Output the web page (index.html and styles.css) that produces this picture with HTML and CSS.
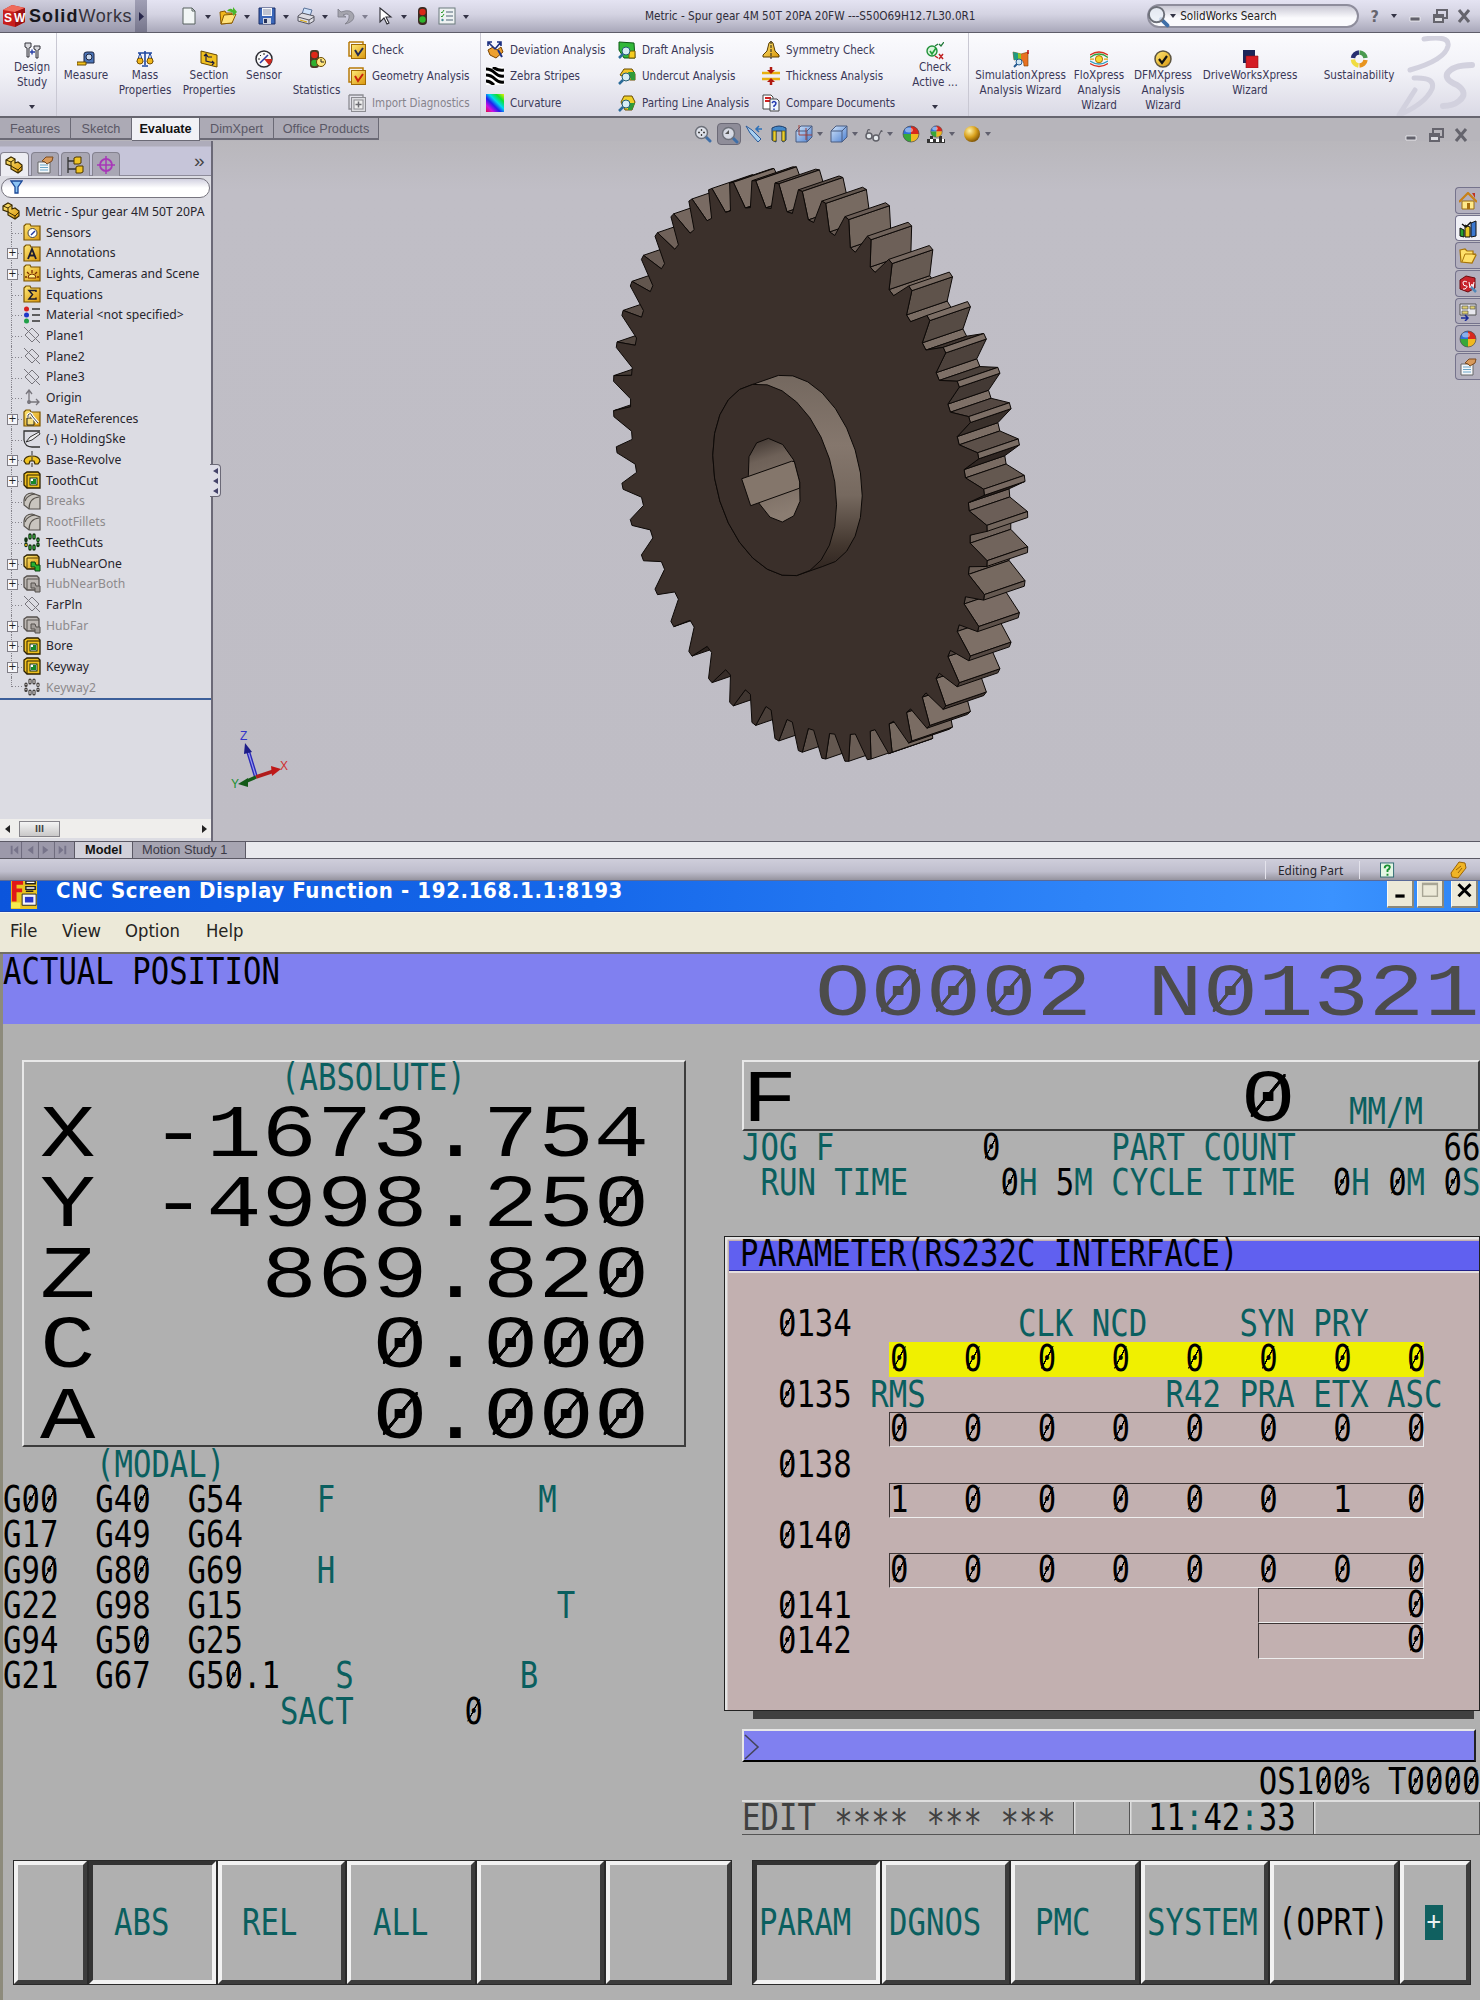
FILE: index.html
```html
<!DOCTYPE html>
<html lang="en">
<head>
<meta charset="utf-8">
<title>SolidWorks and CNC Screen Display</title>
<link rel="stylesheet" href="styles.css">
</head>
<body>
<svg class="defs" width="0" height="0">
<defs>
<linearGradient id="gold" x1="0" y1="0" x2="1" y2="1"><stop offset="0" stop-color="#ffe978"/><stop offset="1" stop-color="#d9960c"/></linearGradient>
<radialGradient id="goldball" cx=".35" cy=".3" r=".8"><stop offset="0" stop-color="#fff2a8"/><stop offset=".5" stop-color="#d9a11c"/><stop offset="1" stop-color="#6b4300"/></radialGradient>
<linearGradient id="rainbow" x1="0" y1="1" x2="1" y2="0"><stop offset="0" stop-color="#e01040"/><stop offset=".2" stop-color="#d010e0"/><stop offset=".4" stop-color="#2020f0"/><stop offset=".58" stop-color="#00d8f0"/><stop offset=".78" stop-color="#10e030"/><stop offset="1" stop-color="#f0f000"/></linearGradient>
<linearGradient id="blueface" x1="0" y1="0" x2="1" y2="1"><stop offset="0" stop-color="#d4e6fa"/><stop offset="1" stop-color="#4a7ed0"/></linearGradient>
<linearGradient id="hubside" x1="0" y1="0" x2="0" y2="1"><stop offset="0" stop-color="#74685f"/><stop offset=".35" stop-color="#85776d"/><stop offset=".6" stop-color="#76695f"/><stop offset=".85" stop-color="#43372f"/><stop offset="1" stop-color="#2b211d"/></linearGradient>
<linearGradient id="borewall" x1="0" y1="0" x2=".2" y2="1"><stop offset="0" stop-color="#3c322d"/><stop offset=".3" stop-color="#6e6158"/><stop offset="1" stop-color="#8b7d72"/></linearGradient>
<symbol id="caret" viewBox="0 0 6 4"><path d="M0 0h6L3 4z" fill="#333345"/></symbol>
<symbol id="part" viewBox="0 0 18 18"><path d="M1 4l5-3 4 2v4l3-1 4 3v5l-4 3-7-4v-3L1 8z" fill="url(#gold)" stroke="#3a2a00" stroke-width="1.2"/><path d="M1 4l5 2 4-3M6 6v4l7 4 4-4M13 14v3" fill="none" stroke="#3a2a00"/></symbol>
<symbol id="folder" viewBox="0 0 18 18"><path d="M1 3l2-2h4l1 2h9v14H1z" fill="url(#gold)" stroke="#7a5400" stroke-width="1.2"/></symbol>
<symbol id="plane" viewBox="0 0 18 18"><path d="M9 2l7 7-7 7-7-7zM1 1l16 16" fill="none" stroke="#77757c"/></symbol>
<symbol id="cut" viewBox="0 0 18 18"><path d="M1 3l3-2h11l2 2v14H4l-3-3z" fill="#f0c020" stroke="#2c2000" stroke-width="1.3"/><path d="M4 17V4h13" fill="none" stroke="#2c2000"/><rect x="7" y="7" width="7" height="7" fill="#fff" stroke="#103010"/><path d="M8 13v-3h2V8h3v5z" fill="#18882a"/></symbol>
<symbol id="boss" viewBox="0 0 18 18"><path d="M1 3l3-2h10l2 2v12H4l-3-3z" fill="url(#gold)" stroke="#2c2000" stroke-width="1.3"/><path d="M4 15V4h12" fill="none" stroke="#5a4000"/><path d="M8 8h4l1 3h4v6h-5v-4H8z" fill="#28b030" stroke="#0a4010"/></symbol>
<symbol id="bossoff" viewBox="0 0 18 18"><path d="M1 3l3-2h10l2 2v12H4l-3-3z" fill="#bdb8b4" stroke="#55504d" stroke-width="1.3"/><path d="M4 15V4h12" fill="none" stroke="#55504d"/><path d="M8 8h4l1 3h4v6h-5v-4H8z" fill="#a19c98" stroke="#55504d"/></symbol>
<symbol id="fillet" viewBox="0 0 18 18"><path d="M1 8Q2 1 9 1l8 3v13H6l-5-4z" fill="#c9c5bf" stroke="#55514c" stroke-width="1.2"/><path d="M6 17Q6 6 16 5M2 9Q4 3 12 2" fill="none" stroke="#55514c" stroke-width="1.2"/></symbol>
<symbol id="pattern" viewBox="0 0 18 18"><path d="M7 2v3M11 2v3M7 13v3M11 13v3M3 6v1.500M3 11v1.500M15 6v1.500M15 11v1.500" fill="none" stroke="#123312" stroke-width="3.400" stroke-linecap="round"/><path d="M7 2v3M11 2v3M7 13v3M11 13v3M15 6v2M15 11v1" stroke="#35b53a" stroke-width="1.300"/><path d="M3 11v2" stroke="#e8b010" stroke-width="1.600"/></symbol>
<symbol id="patternoff" viewBox="0 0 18 18"><path d="M7 2v3M11 2v3M7 13v3M11 13v3M3 6v1.500M3 11v1.500M15 6v1.500M15 11v1.500" fill="none" stroke="#45413f" stroke-width="3.200" stroke-linecap="round"/><path d="M7 2v3M11 2v3M7 13v3M11 13v3M15 6v2M15 11v1M3 6v1M3 11v1" stroke="#c9c4c0" stroke-width="1.300"/></symbol>
<symbol id="ball" viewBox="0 0 18 18"><path d="M9 9V1a8 8 0 0 0-8 8z" fill="#2f70d8"/><path d="M9 9h8a8 8 0 0 0-8-8z" fill="#d8281c"/><path d="M9 9H1a8 8 0 0 0 8 8z" fill="#38a838"/><path d="M9 9v8a8 8 0 0 0 8-8z" fill="#f0b820"/><circle cx="9" cy="9" r="8" fill="none" stroke="#4a4a50" stroke-width=".7"/><ellipse cx="7" cy="5" rx="4" ry="2.5" fill="#fff" opacity=".45"/></symbol>
<symbol id="lens" viewBox="0 0 18 18"><path d="M11 11l5 5" stroke="#3f6fa8" stroke-width="3" stroke-linecap="round"/><circle cx="7.5" cy="7.5" r="6" fill="#e8eef6" fill-opacity=".8" stroke="#6d7079" stroke-width="1.5"/></symbol>
<symbol id="wmin" viewBox="0 0 18 18"><path d="M4 10h10v4H4z" fill="#62616b" stroke="#f2f2f6" stroke-width=".8"/></symbol>
<symbol id="wres" viewBox="0 0 18 18"><path d="M6 7V3h10v8h-4" fill="none" stroke="#65646d" stroke-width="2"/><path d="M3 8h9v7H3z" fill="#dddde2" stroke="#65646d" stroke-width="2"/><path d="M3 10h9" stroke="#65646d" stroke-width="2"/></symbol>
<symbol id="wclose" viewBox="0 0 18 18"><path d="M4 3l10 12M14 3L4 15" stroke="#65646d" stroke-width="3"/></symbol>
<symbol id="cube" viewBox="0 0 18 18"><path d="M1 6l5-5h11v11l-5 5H1z" fill="url(#blueface)" stroke="#4b5c80"/><path d="M1 6h11v11M12 6l5-5" fill="none" stroke="#4b5c80"/></symbol>
<symbol id="checkbox" viewBox="0 0 18 18"><path d="M1 1h14v3M1 1v14h3" fill="none" stroke="#b87b08" stroke-width="1.5"/><rect x="3.5" y="3.5" width="14" height="14" fill="url(#gold)" stroke="#a06a05"/></symbol>
<symbol id="hand" viewBox="0 0 18 18"><path d="M2 6h12v11H2z" fill="#f4f7fa" stroke="#666"/><path d="M4 9h8M4 11.5h8M4 14h8" stroke="#6aa5c8" stroke-width="1.2"/><path d="M6 5l4-4h7l-1 4-5 3-2-2z" fill="#d89a5c" stroke="#7a4a20"/></symbol>
</defs>
</svg>

<section class="sw">
  <header class="titlebar">
    <div class="brand">
      <svg class="cubelogo" viewBox="0 0 24 24"><path d="M1 6l9-5 13 3v14l-10 5-12-3z" fill="#c81e1c"/><path d="M1 6l9-5 13 3-10 4z" fill="#ef6b5c"/><path d="M13 8l10-4v14l-10 5z" fill="#9d1012"/><text x="2" y="18" class="logotext">S</text><text x="12" y="18" class="logotext">W</text></svg>
      <span class="brandname"><b>Solid</b>Works</span>
    </div>
    <div class="brandarrow"><svg width="5" height="9" viewBox="0 0 5 9"><path d="M0 0l5 4.5L0 9z" fill="#26254a"/></svg></div>
    <div class="quick">
      <svg class="ic" viewBox="0 0 18 18"><path d="M3 1h9l3 3v13H3z" fill="#f2f6f6" stroke="#56605f"/><path d="M12 1v3h3" fill="none" stroke="#56605f"/></svg><svg class="car"><use href="#caret"/></svg>
      <svg class="ic" viewBox="0 0 18 18"><path d="M1 5l5-1 1 2h6v10l-11 1z" fill="#f2b81c" stroke="#8a5a00"/><path d="M2 17l3-9 12-1-4 9z" fill="#ffe27a" stroke="#8a5a00"/><path d="M8 4q3-4 6-1V0l4 5-4 4V6q-3-2-6-2z" fill="#49b82c"/></svg><svg class="car"><use href="#caret"/></svg>
      <svg class="ic" viewBox="0 0 18 18"><path d="M1 1h16v16H1z" fill="#3a66b8" stroke="#1c2f66"/><path d="M4 1h10v8H4z" fill="#f4f6fa"/><path d="M5 3h8M5 5h8M5 7h8" stroke="#8a92a8"/><path d="M5 11h8v6H5z" fill="#cfd4df"/><path d="M6 12h3v4H6z" fill="#26325a"/></svg><svg class="car"><use href="#caret"/></svg>
      <svg class="ic" viewBox="0 0 18 18"><path d="M5 7l2-6 8 2-2 6z" fill="#cfe2fa" stroke="#5a7299"/><path d="M1 9l4-3 12 3v5l-5 3-11-3z" fill="#dcdce2" stroke="#55555f"/><path d="M1 10l11 3 5-3M12 13v4" fill="none" stroke="#55555f"/><path d="M3 13l7 2" stroke="#d9a810"/></svg><svg class="car"><use href="#caret"/></svg>
      <svg class="ic" viewBox="0 0 18 18"><path d="M1 2v8h8L6 8q7-3 6 3 0 3-4 6 9-2 9-8Q15 1 4 5z" fill="#a5a5ae" stroke="#7c7c88" stroke-width=".8"/></svg><svg class="car dim"><use href="#caret"/></svg>
      <svg class="ic" viewBox="0 0 18 18"><path d="M4 1v14l4-4 3 6 2-1-3-6h5z" fill="#fff" stroke="#2c2c33" stroke-width="1.1"/></svg><svg class="car"><use href="#caret"/></svg>
      <svg class="ic light" viewBox="0 0 18 18"><rect x="5" y="0" width="9" height="18" rx="4" fill="#3b2b22"/><circle cx="9.500" cy="5" r="3.200" fill="#d82818"/><circle cx="9.500" cy="12.500" r="3.200" fill="#2fb52c"/></svg>
      <svg class="ic list" viewBox="0 0 18 18"><rect x="1" y="1" width="16" height="16" fill="#eef2f2" stroke="#6b7b7d"/><path d="M3 5l1 1 2-3M3 9l1 1 2-3" fill="none" stroke="#2a9a2a"/><circle cx="4.500" cy="13" r="1.200" fill="#4a8a92"/><path d="M8 5h7M8 9h7M8 13h7" stroke="#8494a0" stroke-width="1.500"/></svg><svg class="car"><use href="#caret"/></svg>
    </div>
    <div class="doctitle">Metric - Spur gear 4M 50T 20PA 20FW ---S50O69H12.7L30.0R1</div>
    <div class="search"><svg class="bigic"><use href="#lens"/></svg><svg class="car"><use href="#caret"/></svg><span>SolidWorks Search</span></div>
    <div class="winctl"><b>?</b><svg class="car"><use href="#caret"/></svg><svg class="wi"><use href="#wmin"/></svg><svg class="wi"><use href="#wres"/></svg><svg class="wi"><use href="#wclose"/></svg></div>
  </header>

  <nav class="ribbon">
    <div class="cmd high w-design"><svg class="ic" viewBox="0 0 18 18"><path d="M2 1h6v4L6 6v9H4V6L2 5zM11 4h6v3l-2 1v8h-2V8l-2-1z" fill="#d9d9de" stroke="#33333a"/><path d="M7 10h5M9 7.500v5" stroke="#2840a8" stroke-width="1.400"/></svg><span>Design<br>Study</span><svg class="car"><use href="#caret"/></svg></div>
    <div class="cmd w-measure sepl"><svg class="ic" viewBox="0 0 18 18"><path d="M7 4q0-2 3-2h5q2 0 2 2v9H7z" fill="#4a74b8" stroke="#1c2440"/><circle cx="12" cy="7" r="3" fill="#c9d9ee" stroke="#1c2440"/><path d="M0 12h9v3H0z" fill="#f2c21c" stroke="#6a4a00"/></svg><span>Measure</span></div>
    <div class="cmd w-mass"><svg class="ic" viewBox="0 0 18 18"><path d="M9 1v14M2 3h14M6 16h6" stroke="#2048a0" stroke-width="1.600"/><path d="M4 3L1 12h6zM14 3l-3 9h6z" fill="none" stroke="#2048a0"/><ellipse cx="4" cy="11" rx="3" ry="3" fill="#f2b81c" stroke="#7a5200"/><ellipse cx="14" cy="11" rx="3" ry="3" fill="#f2b81c" stroke="#7a5200"/></svg><span>Mass<br>Properties</span></div>
    <div class="cmd w-section"><svg class="ic" viewBox="0 0 18 18"><path d="M1 1l16 4v12L1 13z" fill="#f0c020" stroke="#6a4a00"/><path d="M6 4v7l8 2M4 6l2-2 2 3M12 11l2 2-2 2M8 7h4" fill="none" stroke="#1c1c40" stroke-width="1.200"/></svg><span>Section<br>Properties</span></div>
    <div class="cmd w-sensor"><svg class="ic" viewBox="0 0 18 18"><circle cx="9" cy="9" r="8" fill="#fafafa" stroke="#2c2c33" stroke-width="1.500"/><path d="M9 9l5 6q3-2 3-6z" fill="#d02a20"/><path d="M5 13l8-8" stroke="#2c3ca0" stroke-width="1.600"/><path d="M3 9h2M9 3v2M5 5l1 1" stroke="#222"/></svg><span>Sensor</span></div>
    <div class="cmd w-stat"><svg class="ic" viewBox="0 0 18 18"><rect x="2" y="0" width="9" height="18" rx="3" fill="#4b3b25"/><circle cx="6.500" cy="5" r="3.300" fill="#e02818"/><circle cx="6.500" cy="13" r="3.300" fill="#30b030"/><circle cx="13" cy="12" r="4.500" fill="#ffe680" stroke="#6a4a00"/><path d="M13 9v3h3" fill="none" stroke="#222"/></svg><span class="drop">Statistics</span></div>
    <ul class="stack w-c1">
      <li><svg class="ic" viewBox="0 0 18 18"><use href="#checkbox"/><path d="M7 9l3 5 5-7" fill="none" stroke="#222a50" stroke-width="2"/></svg>Check</li>
      <li><svg class="ic" viewBox="0 0 18 18"><use href="#checkbox"/><path d="M7 9l3 5 5-7" fill="none" stroke="#c8220c" stroke-width="2"/></svg>Geometry Analysis</li>
      <li class="off"><svg class="ic" viewBox="0 0 18 18"><path d="M1 1h14v3M1 1v14h3" fill="none" stroke="#8c8c92" stroke-width="1.300"/><rect x="3.500" y="3.500" width="14" height="14" fill="#dcdce0" stroke="#8c8c92"/><rect x="6" y="6" width="9" height="9" fill="#eee" stroke="#8c8c92"/><path d="M10.500 7.500v6M7.500 10.500h6" stroke="#6c6c72" stroke-width="1.500"/></svg>Import Diagnostics</li>
    </ul>
    <ul class="stack w-c2 sepl">
      <li><svg class="ic" viewBox="0 0 18 18"><path d="M2 9l5-3 4 3 4-3 2 5-7 6-6-3z" fill="#eda030" stroke="#7a4400"/><path d="M9 8L2 1m0 4V1h4M9 8l6-7m-4 0h4v4" fill="none" stroke="#1c3080" stroke-width="1.600"/><path d="M12 9l4 7" stroke="#1c3080" stroke-width="2"/></svg>Deviation Analysis</li>
      <li><svg class="ic" viewBox="0 0 18 18"><rect width="18" height="18" fill="#fff"/><path d="M0 2q5 0 9 4t9 3M0 8q5 0 9 4t9 3M7 0q5 4 11 3M0 14q4 0 8 4" fill="none" stroke="#000" stroke-width="3"/></svg>Zebra Stripes</li>
      <li><svg class="ic" viewBox="0 0 18 18"><rect width="18" height="18" fill="url(#rainbow)"/></svg>Curvature</li>
    </ul>
    <ul class="stack w-c3">
      <li><svg class="ic" viewBox="0 0 18 18"><path d="M1 1l15 1 1 15H6L1 9z" fill="#32b83a" stroke="#0c5a14"/><path d="M11 10h6v7h-6z" fill="#f4cc20" stroke="#7a5800"/><circle cx="8" cy="10" r="4" fill="#d6ecf4" stroke="#235d72"/><path d="M5 13l-4 4" stroke="#2b6b9a" stroke-width="2.500"/></svg>Draft Analysis</li>
      <li><svg class="ic" viewBox="0 0 18 18"><path d="M2 8l4-6h8l3 5v6h-5z" fill="#f0c428" stroke="#6a4c00"/><path d="M10 5h7v8h-4z" fill="#2f9a38"/><circle cx="8" cy="10" r="4" fill="#d6ecf4" stroke="#235d72"/><path d="M5 13l-4 4" stroke="#2b6b9a" stroke-width="2.500"/></svg>Undercut Analysis</li>
      <li><svg class="ic" viewBox="0 0 18 18"><path d="M3 8l3-6h8l3 6-3 8H7z" fill="#f0d028" stroke="#6a4c00"/><path d="M10 9h7l-3 7h-4z" fill="#2f9a38"/><circle cx="8" cy="10" r="4" fill="#d6ecf4" stroke="#235d72"/><path d="M5 13l-4 4" stroke="#2b6b9a" stroke-width="2.500"/></svg>Parting Line Analysis</li>
    </ul>
    <ul class="stack w-c4">
      <li><svg class="ic" viewBox="0 0 18 18"><path d="M7 2q2-3 4 0l2 8 4 4v2H1v-2l4-4z" fill="url(#gold)" stroke="#5a3c00"/><path d="M9 0v18" stroke="#222" stroke-dasharray="3 1"/></svg>Symmetry Check</li>
      <li><svg class="ic" viewBox="0 0 18 18"><path d="M0 6h18M0 12h18" stroke="#e8b010" stroke-width="2.500"/><path d="M9 0v4M9 14v4" stroke="#b01810" stroke-width="2.500"/><path d="M5 3h8L9 7zM5 15h8l-4-4z" fill="#b01810"/></svg>Thickness Analysis</li>
      <li><svg class="ic" viewBox="0 0 18 18"><path d="M1 1h8l2 2v12H1z" fill="#fff" stroke="#444"/><path d="M3 4h6M3 7h5" stroke="#d02020" stroke-width="2"/><path d="M8 5h7l2 2v10H8z" fill="#eef4fc" stroke="#444"/><path d="M10 9q2-3 4 0 0 2-2 3v1M12 14.500v1.500" fill="none" stroke="#2038b0" stroke-width="1.500"/></svg>Compare Documents</li>
    </ul>
    <div class="cmd high w-active"><svg class="ic" viewBox="0 0 18 18"><circle cx="6" cy="9" r="5" fill="#d8f4dc" stroke="#209038" stroke-width="1.400"/><path d="M4 9l2 3 4-6" fill="none" stroke="#20a038" stroke-width="1.600"/><path d="M9 4l3-2M13 2l2 2 3-4" fill="none" stroke="#207838" stroke-width="1.300"/><path d="M9 14l3 2M13 12l4 5M17 12l-4 5" stroke="#c02020" stroke-width="1.500"/></svg><span>Check<br>Active ...</span><svg class="car"><use href="#caret"/></svg></div>
    <div class="cmd w-sim sepl"><svg class="ic" viewBox="0 0 18 18"><path d="M1 2l8 2 7-2v14h-4q0-7-5-7l-5 1z" fill="#e87020" stroke="#7a4000" stroke-width=".6"/><path d="M1 2l5 1v7H2z" fill="#1f9a80"/><path d="M6 3l3 1v6H6z" fill="#88c828"/><circle cx="7" cy="12" r="3" fill="#cfe6f4" stroke="#245a90"/><path d="M5 14l-3 3" stroke="#245a90" stroke-width="2"/><path d="M16 0v4" stroke="#c01010" stroke-width="1.500"/></svg><span>SimulationXpress<br>Analysis Wizard</span></div>
    <div class="cmd w-flo"><svg class="ic" viewBox="0 0 18 18"><g fill="none" stroke-width="1.300"><path d="M0 5q9-6 18 0" stroke="#d83020"/><path d="M0 7.500q9-7 18 0" stroke="#30a040"/><path d="M0 11q9 6 18 0" stroke="#30a0c0"/><path d="M0 13.500q9 6 18 0" stroke="#d83020"/><path d="M0 9.200h4M14 9.200h4" stroke="#e0a010"/></g><circle cx="9" cy="9.200" r="3.600" fill="#f8d830" stroke="#b07000"/></svg><span>FloXpress<br>Analysis<br>Wizard</span></div>
    <div class="cmd w-dfm"><svg class="ic" viewBox="0 0 18 18"><circle cx="9" cy="9" r="8" fill="url(#gold)" stroke="#5c5440" stroke-width="1.500"/><path d="M5 9l3 4 5-7" fill="none" stroke="#111" stroke-width="2.200"/></svg><span>DFMXpress<br>Analysis<br>Wizard</span></div>
    <div class="cmd w-drive"><svg class="ic" viewBox="0 0 18 18"><path d="M2 0h12v13H2z" fill="#1c2458"/><path d="M5 6h12v12H5z" fill="#d41c24" stroke="#8a1018" stroke-width=".6"/></svg><span>DriveWorksXpress<br>Wizard</span></div>
    <div class="cmd w-sust"><svg class="ic" viewBox="0 0 18 18"><g fill="none" stroke-width="4.500"><path d="M3 8a6.500 6.500 0 0 1 6-5.500" stroke="#282f70"/><path d="M9.500 2.500A6.500 6.500 0 0 1 15.500 8" stroke="#4a9a50"/><path d="M15.500 10a6.500 6.500 0 0 1-6 5.500" stroke="#e89420"/><path d="M8.500 15.500a6.500 6.500 0 0 1-5.500-6" stroke="#f0dc40"/></g></svg><span>Sustainability</span></div>
    <svg class="dslogo" viewBox="0 0 80 80"><g fill="none" stroke="#d2d1de" stroke-linecap="round" stroke-linejoin="round"><path d="M28 3Q54-1 52 10 49 24 14 34" stroke-width="5"/><path d="M18 42q22-1 18 11Q29 68 3 79L19 54" stroke-width="5"/><path d="M76 29q-20 0-25 9-2 6 10 11 12 8 2 16-6 5-16 5" stroke-width="6"/></g></svg>
  </nav>

  <div class="tabsrow">
    <div class="ftabs"><span class="t1">Features</span><span class="t2">Sketch</span><span class="t3 on">Evaluate</span><span class="t4">DimXpert</span><span class="t5">Office Products</span></div>
    <div class="hud">
      <svg class="ic" viewBox="0 0 18 18"><use href="#lens"/><path d="M7.500 4v7M4 7.500h7" stroke="#444" stroke-width="1.300" stroke-dasharray="2 3"/></svg>
      <i class="pressed"><svg class="ic" viewBox="0 0 18 18"><use href="#lens"/><path d="M8 4v4H4z" fill="#555"/></svg></i>
      <svg class="ic" viewBox="0 0 18 18"><path d="M1 1l6 4 9 9-3 3-8-9z" fill="#a8d0f0" stroke="#2c5a98"/><path d="M17 4h-5m2-3l-3 3 3 3" fill="none" stroke="#2c70b8" stroke-width="1.500"/></svg>
      <svg class="ic g1" viewBox="0 0 18 18"><path d="M2 3q7-4 14 0v12q-3 3-4 1V6H6v11l-4-2z" fill="#4488c8" stroke="#1c3c68"/><path d="M3 6h3v10H3zM12 6h3v10h-3z" fill="#e8d030" stroke="#6a5400" stroke-width=".7"/></svg>
      <svg class="ic g1" viewBox="0 0 18 18"><use href="#cube"/><path d="M4 0v10h13M11 3v12" fill="none" stroke="#a03830" stroke-width=".9"/></svg><svg class="car soft"><use href="#caret"/></svg>
      <svg class="ic g1"><use href="#cube"/></svg><svg class="car soft"><use href="#caret"/></svg>
      <svg class="ic g1" viewBox="0 0 18 18"><path d="M2 10Q2 3 5 5M13 12l3-6q1-1 1 1" fill="none" stroke="#606068" stroke-width="1.200"/><circle cx="4" cy="11" r="3" fill="#e6eaee" stroke="#606068" stroke-width="1.500"/><circle cx="11" cy="13" r="3" fill="#e6eaee" stroke="#606068" stroke-width="1.500"/></svg><svg class="car soft"><use href="#caret"/></svg>
      <svg class="ic g3"><use href="#ball"/></svg>
      <svg class="ic g2" viewBox="0 0 18 18"><path d="M0 14h3v-3h3v3h6v-3h3v3h3v4H0z" fill="#333"/><path d="M3 14h3v3H3zM9 14h3v3H9zM15 14h2v3h-2z" fill="#fff"/><svg x="3" y="0" width="13" height="13"><use href="#ball"/></svg></svg><svg class="car soft"><use href="#caret"/></svg>
      <svg class="ic g3" viewBox="0 0 18 18"><circle cx="9" cy="9" r="8" fill="url(#goldball)"/></svg><svg class="car soft"><use href="#caret"/></svg>
    </div>
    <div class="docctl"><svg class="wi"><use href="#wmin"/></svg><svg class="wi"><use href="#wres"/></svg><svg class="wi"><use href="#wclose"/></svg></div>
  </div>

  <div class="work">
    <aside class="panel">
      <div class="ptabs">
        <i class="on"><svg class="ic"><use href="#part"/></svg></i>
        <i><svg class="ic"><use href="#hand"/></svg></i>
        <i><svg class="ic" viewBox="0 0 18 18"><path d="M2 1v16M2 5h7M2 13h8" stroke="#333" stroke-width="1.300"/><path d="M8 2l2-1h5v6l-2 1H8zM10 11l2-1h5v6l-2 1h-5z" fill="#f0c424" stroke="#4a3600"/></svg></i>
        <i><svg class="ic" viewBox="0 0 18 18"><path d="M9 0v18M0 9h18" stroke="#a838b8" stroke-width="1.500"/><circle cx="9" cy="9" r="6" fill="none" stroke="#a838b8" stroke-width="1.800"/></svg></i>
        <b>»</b>
      </div>
      <div class="filter"><svg width="13" height="14" viewBox="0 0 13 14"><path d="M1 1h11L8 7v6H5V7z" fill="#8cc4f4" stroke="#1c4a98" stroke-width="1.300"/></svg></div>
      <ul class="tree">
        <li class="root"><svg class="ic"><use href="#part"/></svg>Metric - Spur gear 4M 50T 20PA</li>
        <li><i></i><svg class="ic" viewBox="0 0 18 18"><use href="#folder"/><circle cx="9.500" cy="10" r="4.500" fill="#fff" stroke="#444"/><path d="M8 12l4-4" stroke="#2038a0" stroke-width="1.400"/></svg>Sensors</li>
        <li><i class="plus"></i><svg class="ic" viewBox="0 0 18 18"><use href="#folder"/><path d="M5 15l4-10 4 10M6.500 11.500h5" fill="none" stroke="#1c1c30" stroke-width="1.800"/></svg>Annotations</li>
        <li><i class="plus"></i><svg class="ic" viewBox="0 0 18 18"><use href="#folder"/><path d="M5 14a4 4 0 0 1 8 0z" fill="#fff080" stroke="#7a2c00"/><path d="M9 6v3M4 8l2 2M14 8l-2 2M2 13h2M14 13h2" stroke="#7a2c00" stroke-width="1.300"/></svg>Lights, Cameras and Scene</li>
        <li><i></i><svg class="ic" viewBox="0 0 18 18"><use href="#folder"/><path d="M13 7V5.500H6l3.500 4L6 14h7v-1.500" fill="none" stroke="#1c1c30" stroke-width="1.500"/></svg>Equations</li>
        <li><i></i><svg class="ic" viewBox="0 0 18 18"><circle cx="3.500" cy="3" r="2.500" fill="#d82020"/><circle cx="3.500" cy="9" r="2.500" fill="#2038c8"/><circle cx="3.500" cy="15" r="2.500" fill="#20a048"/><path d="M9 3h8M9 9h8M9 15h8" stroke="#333" stroke-width="1.600"/></svg>Material &lt;not specified&gt;</li>
        <li><i></i><svg class="ic"><use href="#plane"/></svg>Plane1</li>
        <li><i></i><svg class="ic"><use href="#plane"/></svg>Plane2</li>
        <li><i></i><svg class="ic"><use href="#plane"/></svg>Plane3</li>
        <li><i></i><svg class="ic" viewBox="0 0 18 18"><path d="M6 15V2M3 5l3-4 3 4M5 13h11M13 10l3 3-3 3" fill="none" stroke="#77757c" stroke-width="1.300"/><circle cx="6" cy="13" r="2" fill="#77757c"/></svg>Origin</li>
        <li><i class="plus"></i><svg class="ic" viewBox="0 0 18 18"><use href="#folder"/><path d="M4 9h7v7H4z" fill="#f8e080" stroke="#222"/><path d="M5 9V6q3-3 4 1l6 7" fill="none" stroke="#fff" stroke-width="3"/><path d="M5 9V6q3-3 4 1l6 7" fill="none" stroke="#444"/></svg>MateReferences</li>
        <li><i></i><svg class="ic" viewBox="0 0 18 18"><path d="M17 1H1v9q1 7 8 7h8" fill="none" stroke="#333" stroke-width="1.300"/><path d="M3 12l4-5 9-5 1 2-8 6z" fill="#eee" stroke="#333"/></svg>(-) HoldingSke</li>
        <li><i class="plus"></i><svg class="ic" viewBox="0 0 18 18"><path d="M1 10q1-5 8-5t8 5l-2 3h-3l-1-3H7l-1 3H3z" fill="#f0c424" stroke="#3a2a00" stroke-width="1.200"/><path d="M9 0v18" stroke="#333" stroke-dasharray="4 2"/></svg>Base-Revolve</li>
        <li><i class="plus"></i><svg class="ic"><use href="#cut"/></svg>ToothCut</li>
        <li class="off"><i></i><svg class="ic"><use href="#fillet"/></svg>Breaks</li>
        <li class="off"><i></i><svg class="ic"><use href="#fillet"/></svg>RootFillets</li>
        <li><i></i><svg class="ic"><use href="#pattern"/></svg>TeethCuts</li>
        <li><i class="plus"></i><svg class="ic"><use href="#boss"/></svg>HubNearOne</li>
        <li class="off"><i class="plus"></i><svg class="ic"><use href="#bossoff"/></svg>HubNearBoth</li>
        <li><i></i><svg class="ic"><use href="#plane"/></svg>FarPln</li>
        <li class="off"><i class="plus"></i><svg class="ic"><use href="#bossoff"/></svg>HubFar</li>
        <li><i class="plus"></i><svg class="ic"><use href="#cut"/></svg>Bore</li>
        <li><i class="plus"></i><svg class="ic"><use href="#cut"/></svg>Keyway</li>
        <li class="off last"><i></i><svg class="ic"><use href="#patternoff"/></svg>Keyway2</li>
      </ul>
      <div class="hscroll"><svg width="5" height="8" viewBox="0 0 5 8"><path d="M5 0v8L0 4z" fill="#222"/></svg><span>III</span><svg class="r" width="5" height="8" viewBox="0 0 5 8"><path d="M0 0v8l5-4z" fill="#222"/></svg></div>
      <div class="grip"><svg width="5" height="28" viewBox="0 0 5 28"><path d="M5 0v6L0 3zM5 10v6l-5-3zM5 20v6l-5-3z" fill="#44426a"/></svg></div>
    </aside>
    <main class="view">
      <svg id="gear" class="gear" viewBox="0 0 1380 1568" preserveAspectRatio="none"></svg>
      <svg class="triad" viewBox="0 0 60 64">
        <path d="M27 49l-8-26" stroke="#2a2ab8" stroke-width="4"/><path d="M27 49l-8-26" stroke="#9a9af0" stroke-width="1.200"/><path d="M15 26l1-11 7 9z" fill="#1c1c88"/>
        <path d="M27 49l18-6" stroke="#b01c1c" stroke-width="3.500"/><path d="M42 38l10 3-9 7z" fill="#c01818"/>
        <path d="M27 49l-9 4" stroke="#145a18" stroke-width="3.500"/><path d="M19 50l-10 6 10 3z" fill="#145a18"/>
        <text x="11" y="12" class="az">Z</text><text x="51" y="42" class="ax">X</text><text x="2" y="60" class="ay">Y</text>
      </svg>
      <div class="taskpane">
        <i><svg class="ic" viewBox="0 0 18 18"><path d="M3 9h12v8H3z" fill="#ffe98a" stroke="#9a6a10"/><path d="M0 10l9-9 9 9" fill="none" stroke="#c88018" stroke-width="2.200"/><path d="M13 1h3v5" fill="#c03020"/><path d="M8 11h3v6H8z" fill="#a87010"/></svg></i>
        <i class="on"><svg class="ic" viewBox="0 0 18 18"><path d="M1 8l4 2v7l-4-1z" fill="#28a030" stroke="#111"/><path d="M6 5l5 2v10H6z" fill="#e8c828" stroke="#111"/><path d="M12 3l5-2v15l-5 1z" fill="#3c78d0" stroke="#111"/><path d="M3 4l4 3 5-5" stroke="#111" stroke-width="1.500" fill="none"/></svg></i>
        <i><svg class="ic" viewBox="0 0 18 18"><path d="M1 3l5-1 2 2h6v3l3 1-4 8-11-1z" fill="#ffe06a" stroke="#a87408" stroke-width="1.200"/><path d="M3 15l3-8h11" fill="none" stroke="#a87408"/></svg></i>
        <i><svg class="ic" viewBox="0 0 18 18"><path d="M1 5l6-4 9 2v10l-7 4-8-3z" fill="#c8242c" stroke="#6a0c10"/><path d="M8 7Q4 5 4 8t3 3-1 3H4M10 7l1 6 2-4 1 4 1-6" fill="none" stroke="#fff"/><path d="M12 12l5 5" stroke="#5088b8" stroke-width="2.500"/></svg></i>
        <i><svg class="ic" viewBox="0 0 18 18"><path d="M1 1h16v11H1z" fill="#e8e8ee" stroke="#555"/><path d="M3 3h6v3H3zM3 8h6v3H3zM11 3h5v3h-5z" fill="#e0d070" stroke="#555" stroke-width=".7"/><path d="M2 15h6M6 12l3 3-3 3" fill="none" stroke="#1c2c98" stroke-width="1.500"/></svg></i>
        <i><svg class="ic"><use href="#ball"/></svg></i>
        <i><svg class="ic"><use href="#hand"/></svg></i>
      </div>
    </main>
  </div>

  <div class="modeltabs">
    <div class="navs"><svg viewBox="0 0 70 17"><g fill="#77748a"><path d="M6 4h2v9H6zM14 4v9L9 8.500zM30 4v9l-6-4.500zM40 4v9l6-4.500zM57 4v9l5-4.500zM63 4h2v9h-2z"/></g><path d="M17.500 0v17M35.500 0v17M52.500 0v17" stroke="#6c697c"/></svg></div>
    <b>Model</b><span>Motion Study 1</span><em></em>
  </div>
  <footer class="status"><span>Editing Part</span><svg class="q" viewBox="0 0 16 16"><rect x=".5" y=".5" width="14" height="15" fill="#e4f6e4" stroke="#2c6a70"/><path d="M5 6q0-3 3-3 2.500 0 2.500 2Q10 7 8 8v2M8 12v2" fill="none" stroke="#189030" stroke-width="2"/></svg><svg class="tag" viewBox="0 0 18 18"><path d="M2 12L10 1l6 1 1 5-8 10-6-1z" fill="#f0b424" stroke="#9a6408"/><path d="M7 9l5-4M9 12l4-5" stroke="#9a6408"/></svg></footer>
</section>

<section class="cnc">
  <header class="xpbar">
    <svg class="appicon" viewBox="0 0 28 30"><path d="M0 0h28v30H0z" fill="#e9c422"/><path d="M1 0h12v4H6v4h6v4H6v10H1z" fill="#e01818"/><path d="M16 0h10v3H16zM16 6h10v3H16zM16 11h8" fill="#fff" stroke="#222" stroke-width="1.500"/><path d="M12 14h15v12H12z" fill="#f4f4fa" stroke="#222"/><path d="M15 17h9v6h-9z" fill="#2838c8"/><path d="M0 23h10v6H0z" fill="#f4ec50"/></svg>
    <h1>CNC Screen Display Function - 192.168.1.1:8193</h1>
    <div class="xpbtn"><svg viewBox="0 0 26 26"><path d="M8 14h10v3.500H8z" fill="#000"/></svg></div>
    <div class="xpbtn"><svg viewBox="0 0 26 26"><rect x="5" y="2" width="16" height="14" fill="none" stroke="#a8a595" stroke-width="1.500"/><path d="M5 3h16" stroke="#a8a595" stroke-width="2"/></svg></div>
    <div class="xpbtn last"><svg viewBox="0 0 26 26"><path d="M7 3l13 13M20 3L7 16" stroke="#000" stroke-width="3.200"/></svg></div>
  </header>
  <nav class="xpmenu"><span class="m1">File</span><span class="m2">View</span><span class="m3">Option</span><span class="m4">Help</span></nav>
  <div class="screen">
    <div class="head"><p class="ln">ACTUAL POSITION</p><p class="big">O0002 N01321</p></div>
    <div class="cols">
      <div class="left">
        <div class="absbox">
          <p class="ln teal abs">(ABSOLUTE)</p>
          <p class="big">X -1673.754</p>
          <p class="big">Y -4998.250</p>
          <p class="big">Z   869.820</p>
          <p class="big">C     0.000</p>
          <p class="big">A     0.000</p>
        </div>
        <p class="ln teal modal">(MODAL)</p>
        <p class="ln">G00  G40  G54    <s>F           M</s></p>
        <p class="ln">G17  G49  G64</p>
        <p class="ln">G90  G80  G69    <s>H</s></p>
        <p class="ln">G22  G98  G15                 <s>T</s></p>
        <p class="ln">G94  G50  G25</p>
        <p class="ln">G21  G67  G50.1   <s>S         B</s></p>
        <p class="ln">               <s>SACT</s>      0</p>
      </div>
      <div class="right">
        <div class="feed"><p class="big">F        0</p><p class="ln teal unit">MM/M</p></div>
        <p class="ln"><s>JOG F</s>        0      <s>PART COUNT</s>        66</p>
        <p class="ln"> <s>RUN TIME</s>     0<s>H</s> 5<s>M</s> <s>CYCLE TIME</s>  0<s>H</s> 0<s>M</s> 0<s>S</s></p>
        <div class="param">
          <h2 class="ptitle"><span class="ln">PARAMETER(RS232C INTERFACE)</span></h2>
          <div class="pbody">
            <p class="ln">  0134         <s>CLK NCD     SYN PRY</s></p>
            <div class="bits hot"><p class="ln">0   0   0   0   0   0   0   0</p></div>
            <p class="ln">  0135 <s>RMS             R42 PRA ETX ASC</s></p>
            <div class="bits"><p class="ln">0   0   0   0   0   0   0   0</p></div>
            <p class="ln">  0138</p>
            <div class="bits"><p class="ln">1   0   0   0   0   0   1   0</p></div>
            <p class="ln">  0140</p>
            <div class="bits"><p class="ln">0   0   0   0   0   0   0   0</p></div>
            <div class="val"><p class="ln">  0141</p><div><p class="ln">        0</p></div></div>
            <div class="val"><p class="ln">  0142</p><div><p class="ln">        0</p></div></div>
          </div>
        </div>
        <div class="pshadow"></div>
        <div class="prompt"><svg width="16" height="26" viewBox="0 0 16 26"><path d="M1 1l13 12L1 25" fill="none" stroke="#45455c" stroke-width="1.600"/></svg></div>
        <p class="ln os">                            OS100% T0000</p>
        <div class="mode"><div class="c1"><p class="ln dim">EDIT <i>**** *** ***</i></p></div><div class="c2"></div><div class="c3"><p class="ln">11<s>:</s>42<s>:</s>33</p></div><div class="c4"></div></div>
      </div>
    </div>
    <div class="keys">
      <div class="key"></div><div class="key on k2"><p class="ln teal">ABS</p></div><div class="key k3"><p class="ln teal">REL</p></div><div class="key k4"><p class="ln teal">ALL</p></div><div class="key"></div><div class="key"></div>
      <span></span>
      <div class="key on k7"><p class="ln teal">PARAM</p></div><div class="key k8"><p class="ln teal">DGNOS</p></div><div class="key k9"><p class="ln teal">PMC</p></div><div class="key k10"><p class="ln teal">SYSTEM</p></div><div class="key k11"><p class="ln">(OPRT)</p></div><div class="key k12"><p class="plusbox">+</p></div>
    </div>
  </div>
</section>
<script src="gear.js"></script>
</body>
</html>
```
FILE: styles.css
```css
* { box-sizing: border-box; }
body { margin: 0; width: 1480px; height: 2000px; overflow: hidden; background: #b0b0b0; }
p, ul, h1, h2 { margin: 0; padding: 0; font-weight: normal; }
ul { list-style: none; }
i, em { font-style: normal; }
s { text-decoration: none; }
.defs { position: absolute; }
svg { display: block; flex: none; }
.ic { width: 18px; height: 18px; }
.car { width: 6px; height: 4px; }
.wi { width: 18px; height: 18px; }

/* SolidWorks window */
.sw { height: 880px; display: flex; flex-direction: column; font: 11.6px "DejaVu Sans Condensed", "DejaVu Sans", sans-serif; color: #3a3858; background: #c0bec5; }
.titlebar { flex: none; height: 33px; display: flex; align-items: center; background: linear-gradient(#e4e3f2, #d4d3e2 45%, #a9a8ba); border-bottom: 1.5px solid #5e5d6a; }
.brand { width: 135px; height: 32px; padding-left: 2px; display: flex; align-items: center; gap: 3px; background: linear-gradient(#cfcedd, #9a99ac); }
.cubelogo { width: 24px; height: 24px; }
.logotext { font: bold 12px "Liberation Sans", sans-serif; fill: #fff; }
.brandname { font: 18px "Liberation Sans", sans-serif; color: #35333c; letter-spacing: .6px; }
.brandname b { color: #17161c; letter-spacing: 1.1px; }
.brandarrow { width: 12px; height: 32px; padding-left: 4px; display: flex; align-items: center; background: linear-gradient(#a09fb5, #77768c); }
.quick { width: 500px; padding-left: 33px; display: flex; align-items: center; }
.quick .ic { margin-right: -1px; }
.quick .car { margin: 2px 8.3px 0 8px; }
.quick .light { margin-left: -2px; }
.quick .list { margin-left: 8px; }
.quick .dim { opacity: .5; }
.doctitle { width: 504px; color: #2e2c38; font-size: 11.7px; }
.search { width: 213px; height: 24px; display: flex; align-items: center; border: 2px solid #8e8d9c; border-radius: 12px; background: linear-gradient(#c9c8d4, #fafafd 60%); color: #222; }
.bigic { width: 23px; height: 23px; margin-left: -2px; }
.search .car { margin: 0 4px 0 0; }
.winctl { display: flex; align-items: center; margin-left: 11px; color: #66656e; font-size: 16px; }
.winctl b { width: 13px; }
.winctl .car { margin: 0 9px 0 8px; }
.winctl .wi { margin-right: 6.5px; }

.ribbon { position: relative; flex: none; height: 85px; display: flex; background: linear-gradient(#fbfbfe, #f0f0f6 50%, #dad9e5); border-bottom: 2px solid #66656f; }
.cmd { padding-top: 17px; text-align: center; line-height: 15px; display: flex; flex-direction: column; align-items: center; white-space: nowrap; }
.cmd.high { padding-top: 9px; }
.cmd.high .car { margin-top: 15px; }
.cmd .drop { margin-top: 15px; }
.sepl { border-left: 1px solid #c9c8d3; }
.w-design { width: 56px; padding-left: 8px; } .w-measure { width: 59px; } .w-mass { width: 60px; } .w-section { width: 68px; }
.w-sensor { width: 42px; } .w-stat { width: 63px; } .w-c1 { width: 132px; } .w-c2 { width: 138px; padding-left: 5px; } .w-c3 { width: 144px; }
.w-c4 { width: 140px; } .w-active { width: 66px; } .w-sim { width: 104px; } .w-flo { width: 54px; } .w-dfm { width: 74px; } .w-drive { width: 100px; } .w-sust { width: 118px; }
.stack { padding-top: 4px; }
.stack li { height: 26.300px; display: flex; align-items: center; gap: 6px; white-space: nowrap; font-size: 11.500px; }
.off { color: #86838c; }
.dslogo { position: absolute; left: 1396px; top: 3px; width: 80px; height: 80px; }

.tabsrow { flex: none; height: 23px; display: flex; background: #b7b5bb; }
.ftabs { width: 694px; display: flex; font: 12.700px "Liberation Sans", sans-serif; color: #5a5866; }
.ftabs span { height: 22px; line-height: 22px; text-align: center; border: 1px solid #6b6a76; border-width: 0 1.500px 2px 0; background: #acaab5; white-space: nowrap; }
.ftabs .on { height: 24px; background: #f1f1f6; color: #111; font-weight: bold; }
.t1 { width: 71px; } .t2 { width: 61px; } .t3 { width: 68px; } .t4 { width: 74px; } .t5 { width: 105px; }
.hud { width: 710px; display: flex; align-items: center; height: 32px; z-index: 2; }
.pressed { width: 24px; height: 22px; margin: 0 4px 0 5px; padding: 2px 3px; border-radius: 4px; background: #8f8d99; border: 1px solid #6c6a77; }
.g1 { margin-left: 7px; } .g2 { margin-left: 7px; } .g3 { margin-left: 8.500px; }
.soft { opacity: .65; margin-left: 4px; }
.docctl { display: flex; gap: 7px; padding: 8px 0 0; z-index: 2; margin-left: -2px; }

.work { flex: 1; display: flex; min-height: 0; }
.panel { position: relative; width: 213px; display: flex; flex-direction: column; background: #dcdce3; border-right: 2.500px solid #6b6977; }
.ptabs { height: 35px; padding-top: 11px; display: flex; gap: 2px; background: linear-gradient(#aeacba 0 5px, #c6c5d9 6px); border-bottom: 1px solid #8d8b9a; }
.ptabs i { width: 28.500px; height: 24px; display: flex; justify-content: center; align-items: center; background: #a9a7b4; border: 1px solid #84828f; border-bottom: 0; border-radius: 4px 4px 0 0; }
.ptabs .on { background: #ececf2; }
.ptabs b { margin: -1px 0 0 72px; font: 19px/20px "Liberation Sans", sans-serif; color: #444; }
.filter { height: 20px; margin: 2px 1px 0; padding: 1px 0 0 8px; border: 1.500px solid #77757f; border-radius: 11px; background: linear-gradient(#d2d1e0, #fff 50%); }
.tree { margin-top: 3px; font: 12.150px "Noto Sans", "Open Sans", sans-serif; letter-spacing: .02px; color: #26242c; border-bottom: 2.500px solid #3c5f9a; height: 499px; }
.tree li { height: 20.700px; display: flex; align-items: center; padding-left: 11px; white-space: nowrap; }
.tree li > .ic { margin-right: 5px; }
.tree .root { padding-left: 2px; }
.tree .off { color: #8d8a8c; }
.tree i { width: 12px; height: 20.680px; border-left: 1px dotted #86848c; background: linear-gradient(90deg, #86848c 50%, transparent 50%) 0 11px / 3px 1px repeat-x; }
.tree .plus { position: relative; }
.tree .plus::before { content: "+"; position: absolute; left: -5px; top: 6px; width: 9px; height: 9px; border: 1px solid #807e86; background: #f6f6fa; font: 10px/7px "DejaVu Sans", sans-serif; text-align: center; color: #222; }
.tree .last i { height: 10px; margin-bottom: 10px; background-position: 0 9px; }
.hscroll { margin-top: auto; margin-bottom: 3px; height: 19px; display: flex; align-items: center; padding: 0 4px 0 5px; background: #efeeec; }
.hscroll span { margin-left: 9px; width: 41px; height: 16px; line-height: 14px; text-align: center; background: linear-gradient(#f4f4f4, #c9c8c8); border: 1px solid #86848a; font-size: 9px; font-weight: bold; color: #444; }
.hscroll .r { margin-left: auto; }
.grip { position: absolute; left: 210px; top: 323px; width: 11px; height: 33px; padding: 3px 3px; background: #dedde8; border: 1.500px solid #6b6977; border-left: 0; border-radius: 0 4px 4px 0; z-index: 3; }
.view { position: relative; flex: 1; background: linear-gradient(#b9b7bc, #c0bec6 50px, #bfbdc5); }
.gear { position: absolute; left: 377px; top: -1px; width: 460px; height: 640px; }
.triad { position: absolute; left: 16px; top: 587px; width: 60px; height: 64px; font: 12px "Liberation Sans", sans-serif; }
.az { fill: #3434c8; } .ax { fill: #d03030; } .ay { fill: #209030; }
.taskpane { position: absolute; right: 0; top: 46px; width: 25px; display: flex; flex-direction: column; gap: 1px; }
.taskpane i { height: 26.700px; padding: 4px 3px; background: #b3b0be; border: 1.500px solid #75738c; border-right: 0; border-radius: 4px 0 0 4px; }
.taskpane .on { background: #f0f0f6; }

.modeltabs { flex: none; height: 18px; display: flex; font: 12.800px/16px "Liberation Sans", sans-serif; color: #3b3946; background: #b5b3bd; border-top: 1.500px solid #5b5965; border-bottom: 1.500px solid #5b5965; }
.navs { width: 74px; padding-left: 3px; background: #9c99aa; }
.navs svg { width: 70px; height: 16px; }
.modeltabs b { width: 59px; text-align: center; color: #111; background: #d2d1da; border: 1px solid #5b5965; border-width: 0 1px; }
.modeltabs span { width: 113px; padding-left: 9px; background: #a7a5b2; border-right: 1.500px solid #5b5965; }
.modeltabs em { flex: 1; background: #e9e9ee; }
.status { flex: none; height: 21px; display: flex; align-items: center; background: linear-gradient(#cfcedb, #bfbecd 60%, #96949f); color: #26242c; font: 11.900px "Noto Sans", sans-serif; }
.status span { margin-left: 1265px; width: 95px; padding-left: 12px; border: solid #e4e3ec; border-width: 0 1.500px 0 1.500px; line-height: 18px; white-space: nowrap; }
.status .q { width: 15px; height: 16px; margin-left: 20px; }
.status .tag { width: 18px; height: 18px; margin-left: 54px; }

/* CNC window */
.cnc { height: 1120px; }
.xpbar { height: 32px; display: flex; background: linear-gradient(90deg, #0b55dc, #1668ea 40%, #3a92ff 90%, #2f86f6); border-top: 1.500px solid #5a6a98; border-bottom: 1.500px solid #1746b8; }
.appicon { width: 28px; height: 28px; margin-left: 10px; }
.xpbar h1 { margin-left: 18px; width: 1331px; font: bold 22px/20px "DejaVu Sans Condensed", sans-serif; letter-spacing: .620px; color: #fff; white-space: nowrap; }
.xpbtn { flex: none; width: 27px; height: 27px; margin-right: 3px; background: #ece9d8; border: solid #fbfaf4; border-width: 0 2px 2px 1px; border-bottom-color: #8b887a; border-right-color: #8b887a; }
.xpbtn svg { width: 24px; height: 25px; }
.xpbtn.last { margin: 0 0 0 4px; }
.xpmenu { height: 42px; padding: 0 0 0 10px; display: flex; font: 18.300px/36px "DejaVu Sans Condensed", sans-serif; color: #25241f; background: #ece9d8; border-bottom: 2.500px solid #716f64; border-top: 1.500px solid #f8f7f0; }
.m1 { width: 52px; } .m2 { width: 63px; } .m3 { width: 81px; }
.screen { height: 1046px; border-left: 3px solid #8d8b7c; background: #b0b0b0; color: #000; }

/* 80-column character grid: one cell is 18.46 x 35.23 px */
.ln { display: block; width: max-content; height: 35.230px; font: 36.500px/35.230px "DejaVu Sans Mono", monospace; white-space: pre; transform: scaleX(.840); transform-origin: 0 50%; }
.big { flex: none; width: max-content; height: 70.460px; font: 74px/77px "Liberation Mono", monospace; white-space: pre; transform: scaleX(1.247); transform-origin: 0 50%; }
.teal, .ln s { color: #0a5f5f; }
.dim { color: #404040; }

/* stroke through each zero, from lower left to upper right */
.zero { background: linear-gradient(to bottom right, transparent 46.500%, currentColor 47.500%, currentColor 52.500%, transparent 53.500%) 50% 47% / .400em .620em no-repeat; }
.big .zero { background-size: .380em .580em; background-position: 50% 38.500%; }

.head { height: 70px; display: flex; background: #8080f0; }
.head .ln { flex: none; width: 812px; }
.head .big { color: #4c4c4c; line-height: 83px; }
.cols { display: flex; height: 813px; }
.left { width: 738.500px; padding-top: 36px; }
.absbox { margin-left: 19px; width: 664px; height: 387px; padding-left: 16px; border: 2px solid #e8e8e8; border-right-color: #3c3c3c; border-bottom-color: #3c3c3c; }
.absbox .ln { height: 33px; line-height: 31px; margin-left: 241px; }
.absbox .big { line-height: 83px; }
.modal { margin-left: 93px; }
.right { flex: 1; padding-top: 36px; min-width: 0; }
.feed { height: 71px; margin-bottom: -1px; display: flex; align-items: flex-end; border: 2px solid #e8e8e8; border-right-color: #3c3c3c; border-bottom-color: #3c3c3c; }
.feed .big { line-height: 85px; margin: 0 163px 0 -2px; }
.param { margin: 36px 0 0 -17.500px; height: 475px; border: 1px solid #222; background: #c2b0b0; box-shadow: inset 2.500px 2.500px #e4e4e4; padding: 4px 0 0 4px; }
.ptitle { height: 30px; padding-left: 11px; background: #6060f0; border-bottom: 1px solid #20208a; }
.ptitle .ln { height: 29px; line-height: 25px; }
.pbody { border-top: 2.500px solid #e4dede; padding: 33px 0 0 12px; }
.bits { margin-left: 147.500px; width: 535px; height: 35.230px; border: 1.500px solid #3c3434; border-right-color: #eee; border-bottom-color: #eee; }
.bits .ln, .val div .ln { margin-top: -2px; }
.bits.hot { background: #f0f000; border-color: #f0f000; }
.val { display: flex; height: 35.230px; }
.val > .ln { flex: none; width: 517px; }
.val div { width: 166px; border: 1.500px solid #3c3434; border-right-color: #eee; border-bottom-color: #eee; }
.pshadow { height: 8px; margin: 0 6px 0 11px; background: #404040; }
.prompt { margin-top: 10px; width: 734px; height: 33px; padding: 3px 0; background: #8080f0; border: 2px solid #e8e8e8; border-right-color: #222; border-bottom: 2px solid #000; }
.os { margin-top: 2px; }
.mode { display: flex; height: 35px; border-top: 2px solid #dedede; border-bottom: 1.500px solid #555; }
.mode .ln { line-height: 31px; }
.mode i { vertical-align: -.17em; line-height: 0; }
.mode div { border-right: 1.500px solid #555; box-shadow: inset 1.500px 0 #dedede; }
.mode .c1 { width: 332px; box-shadow: none; } .c2 { width: 56px; } .c3 { width: 184px; padding-left: 18px; } .c4 { flex: 1; }
.keys { height: 125px; margin-top: 23px; display: grid; padding-left: 10px; grid-template-columns: 75px 129px 129px 129.500px 129px 127.500px 19.500px 129px 129.500px 129.500px 129.500px 129.500px 72px; }
.key { padding-top: 40px; border: 5px solid; border-color: #f2f2f2 #3c3c3c #3c3c3c #f2f2f2; outline: 1.500px solid #2a2a2a; outline-offset: -1px; }
.key.on { border-color: #333 #f2f2f2 #f2f2f2 #333; }
.k2 { padding-left: 21px; } .k3 { padding-left: 20px; } .k4 { padding-left: 22px; } .k7 { padding-left: 2px; } .k8 { padding-left: 3px; } .k9 { padding-left: 20px; } .k10 { padding-left: 2px; } .k11 { padding-left: 4px; } .k12 { padding-left: 21px; }
.plusbox { width: 18.500px; height: 35px; text-align: center; font: 24px/33px "DejaVu Sans Mono", monospace; background: #106060; color: #e8f0f0; }
```
FILE: gear.js
```js
// Spur gear, 50 teeth, seen obliquely. Points lie on an ellipse given by
// x = 561 cos t, y = 184 cos t + 687 sin t; the body is extruded along DEPTH.
const TEETH = 50, CENTER = [631, 811], DEPTH = [122, -34];
const svg = document.getElementById('gear');
const rad = d => d * Math.PI / 180;

function point(deg, r, c) {
  const a = rad(deg);
  return [c[0] + 561 * r * Math.cos(a), c[1] + r * (184 * Math.cos(a) + 687 * Math.sin(a))];
}
function poly(pts, fill) {
  const el = document.createElementNS('http://www.w3.org/2000/svg', 'polygon');
  const attrs = {
    points: pts.map(p => p[0].toFixed(1) + ',' + p[1].toFixed(1)).join(' '),
    fill, stroke: '#0d0907', 'stroke-width': 1,
    'stroke-linejoin': 'round', 'vector-effect': 'non-scaling-stroke'
  };
  for (const k in attrs) el.setAttribute(k, attrs[k]);
  svg.appendChild(el);
}
function shade(normalDeg) {
  const k = Math.max(0, Math.cos(rad(normalDeg + 35)));
  const mix = (a, b) => Math.round(a + (b - a) * k);
  return `rgb(${mix(44, 126)},${mix(35, 112)},${mix(31, 103)})`;
}

const outline = [];
for (let i = 0; i < TEETH; i++) {
  const t = 3.6 + i * 7.2;
  outline.push([t - 2.7, .908], [t - .6, 1], [t + .6, 1], [t + 2.7, .908]);
}
const front = outline.map(([t, r]) => point(t, r, CENTER));

const walls = [];
outline.forEach((o, i) => {
  const j = (i + 1) % outline.length;
  const a = front[i], b = front[j];
  if ((b[0] - a[0]) * DEPTH[1] - (b[1] - a[1]) * DEPTH[0] > 0) return;
  const flat = q => [q[1] * Math.cos(rad(q[0])), q[1] * Math.sin(rad(q[0]))];
  const u = flat(o), v = flat(outline[j]);
  const normal = Math.atan2(-(v[0] - u[0]), v[1] - u[1]) * 180 / Math.PI;
  walls.push({ a, b, normal, key: (a[0] + b[0]) - .4 * (a[1] + b[1]) });
});
walls.sort((m, n) => m.key - n.key);
for (const w of walls) {
  poly([w.a, w.b, [w.b[0] + DEPTH[0], w.b[1] + DEPTH[1]], [w.a[0] + DEPTH[0], w.a[1] + DEPTH[1]]], shade(w.normal));
}
poly(front, '#3b302b');

// Hub: a shorter cylinder standing in front of the gear face
const HUB = [554, 833], RISE = [77, -22], SIDES = 26;
const ring = (c, r) => Array.from({ length: SIDES }, (_, i) => point(i * 360 / SIDES, r, c));
const rim = ring(HUB, .331), base = rim.map(p => [p[0] + RISE[0], p[1] + RISE[1]]);
const hull = pts => {
  const s = [...pts].sort((p, q) => p[0] - q[0] || p[1] - q[1]);
  const half = list => list.reduce((h, p) => {
    while (h.length > 1 && (h.at(-1)[0] - h.at(-2)[0]) * (p[1] - h.at(-2)[1]) - (h.at(-1)[1] - h.at(-2)[1]) * (p[0] - h.at(-2)[0]) <= 0) h.pop();
    h.push(p); return h;
  }, []);
  return half(s).slice(0, -1).concat(half(s.reverse()).slice(0, -1));
};
poly(hull(rim.concat(base)), 'url(#hubside)');
poly(rim, '#3a2f2a');

// Bore and keyway
poly([[475, 822], [477, 776], [500, 742], [535, 731], [578, 746], [611, 784], [629, 838], [630, 885], [611, 921], [577, 936], [540, 924], [505, 888]], 'url(#borewall)');
poly([[455, 830], [605, 787], [613, 788], [629, 838], [629, 853], [482, 896]], '#84766b');

// Wrap the control's zeros (digits only, never the letter O) so they get a slash
document.querySelectorAll('.screen .ln, .screen .big').forEach(line => {
  line.innerHTML = line.innerHTML.replace(/0/g, '<span class="zero">0</span>');
});
```
